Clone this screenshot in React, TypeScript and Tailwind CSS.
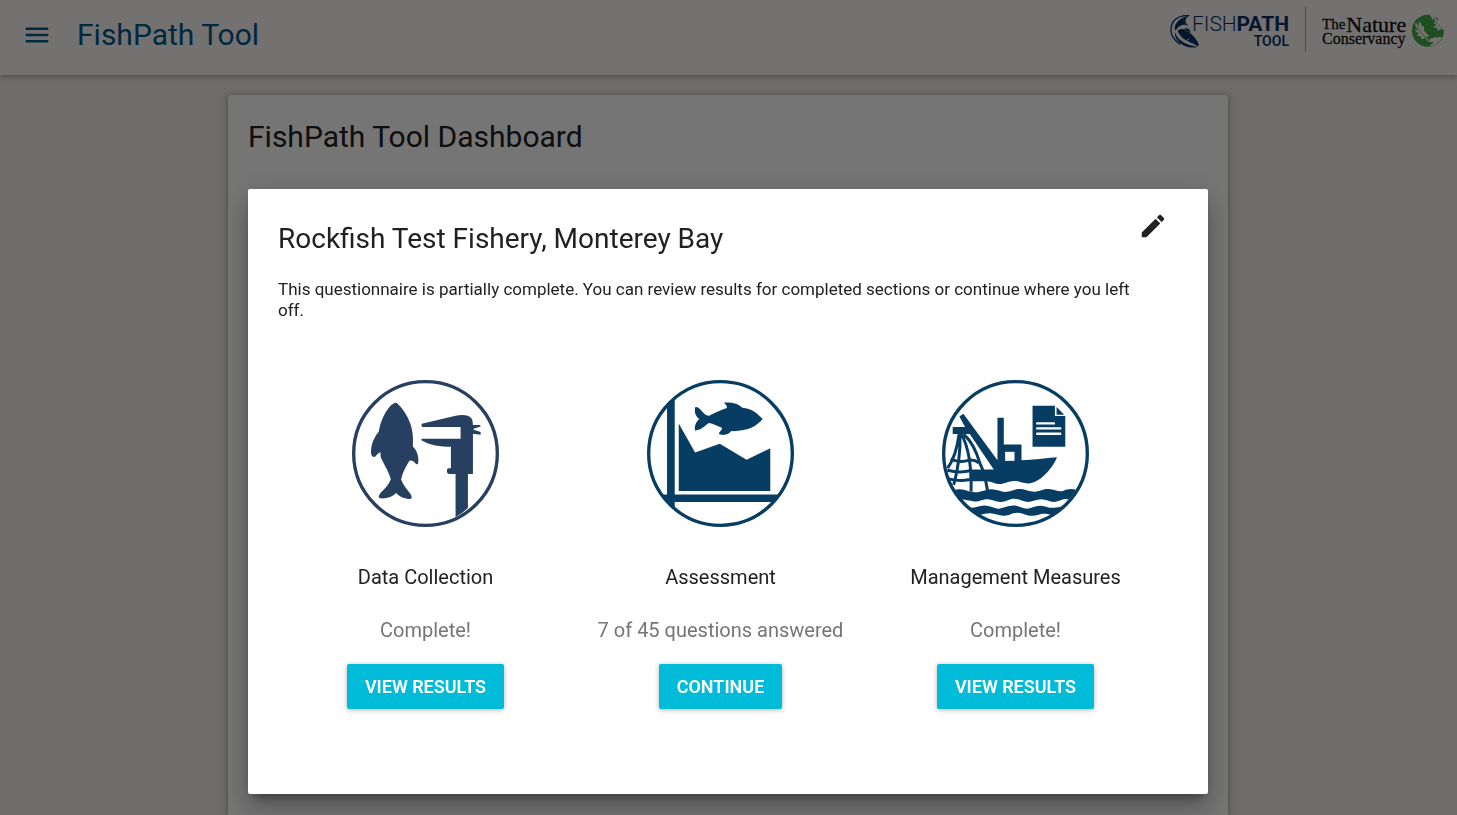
import React from "react";

function FishPathLogo() {
  return (
    <svg className="h-12 w-[122px]" viewBox="0 0 122 48" role="img" aria-label="FishPath Tool">
      <g transform="scale(0.3333) translate(-24 -12)">
        <path d="M88 47C68 46 50 52 41 63C31 76 30 96 38 110C44 120 52 128 61 133" fill="none" stroke="#0a3468" strokeWidth="4" />
        <g fill="#0a3468">
          <path d="M89 46C80 52 75 60 77 66C78 71 82 74 86 77C77 74 68 73 62 77C56 80 50 84 47 92C42 86 44 76 50 68C60 56 72 51 89 46Z" />
          <path d="M53 92C60 86 68 85 76 90C90 97 104 110 112 124C117 132 117 139 113 140C108 134 102 131 93 128C76 121 59 110 53 92Z" />
          <path d="M72 87C80 81 91 86 92 99C85 94 79 91 72 87Z" />
          <path d="M45 97C51 116 68 128 86 134C97 137 106 138 111 141C100 145 81 142 67 134C52 125 43 112 45 97Z" />
        </g>
        <path d="M80 122L87 116" fill="none" stroke="#faf9f5" strokeWidth="3" />
      </g>
      <g fill="#0a3468" fontFamily="'Roboto', sans-serif">
        <text x="24" y="27" fontSize="21" fontWeight="300">FISH</text>
        <text x="121" y="27" fontSize="21" fontWeight="700" textAnchor="end">PATH</text>
        <text x="121" y="42" fontSize="14" fontWeight="600" textAnchor="end">TOOL</text>
      </g>
    </svg>
  );
}

function NatureConservancyLogo() {
  return (
    <svg className="h-12 w-[124px]" viewBox="0 0 124 48" role="img" aria-label="The Nature Conservancy">
      <g fill="#111" stroke="#111" strokeWidth="0.3" fontFamily="'Liberation Serif', serif">
        <text x="0" y="25">
          <tspan fontSize="15">The</tspan>
          <tspan fontSize="22" dx="1" dy="3">Nature</tspan>
        </text>
        <text x="0" y="40" fontSize="16">Conservancy</text>
      </g>
      <g transform="scale(0.3333) translate(-66 -12)">
        <circle cx="384" cy="92" r="48" fill="#42a845" />
        <g fill="#faf9f5">
          <path d="M346 68C352 69 354 75 356 80C357 74 356 69 359 64C364 69 366 75 366 81L371 77C374 83 372 89 371 94C376 93 379 97 379 101C383 101 387 104 388 108C384 110 381 110 379 111C383 115 386 119 388 124L385 126C381 120 377 116 374 114C370 118 366 117 362 115L365 109C359 110 354 108 350 104C354 103 356 101 358 99C352 99 347 95 344 90C349 91 352 90 354 89C348 84 344 76 346 68Z" />
          <path d="M388 44C394 49 397 54 396 60C400 56 403 58 405 62L401 70C405 70 408 72 408 76L399 82C405 84 410 83 413 86L409 91C417 92 422 88 426 86L432 93C433 75 426 59 413 51L414 63L409 57L405 48Q397 44 388 44Z" />
          <path d="M389 126C386 117 393 113 400 114C405 110 411 114 417 111L427 112C419 127 405 137 388 140L394 133Q400 130 401 126Z" />
        </g>
        <path d="M351 76Q361 98 383 121M399 52Q410 72 424 84" fill="none" stroke="#42a845" strokeWidth="2" />
      </g>
    </svg>
  );
}

const ring = <circle cx="242" cy="242" r="215" fill="none" strokeWidth="10" stroke="currentColor" />;

function DataCollectionIcon() {
  return (
    <svg className="size-[147px] text-[#273f60]" viewBox="22 22 440 440" aria-hidden="true">
      {ring}
      <g fill="currentColor">
        <path d="M154 90C163 95 180 116 190 137C204 164 206 194 204 221C216 232 223 250 220 272C218 276 214 275 210 270C205 264 200 262 194 264C184 280 173 299 169 320C174 336 187 349 197 363C202 371 202 377 196 378C180 378 164 371 154 360C143 371 125 378 107 376C100 375 101 369 107 361C119 347 134 334 138 318C133 298 119 277 108 253L107 238C102 239 97 245 92 251C86 255 80 250 79 241C78 218 87 195 102 177C107 145 121 116 138 98Q148 89 154 90Z" />
        <path d="M231 153L329 130C352 124 371 126 380 137Q384 143 384 157H403Q407 157 407 161L386 168V171L407 178V186L384 183V303H369V405Q352 422 332 432V303H312Q306 303 306 295Q306 286 312 286H318V222C287 222 253 217 231 203Q227 198 234 198H347V163H234Q228 162 231 153Z" />
      </g>
    </svg>
  );
}

function AssessmentIcon() {
  return (
    <svg className="size-[147px] text-[#083d63]" viewBox="22 22 440 440" aria-hidden="true">
      {ring}
      <g fill="currentColor">
        <path d="M82 98L105 79V365H417L398 387H105V405L82 382L62 365H82Z" />
        <path d="M117 152L166 239L240 213L320 261L391 226V354H117Z" />
        <path d="M166 104C172 99 181 108 187 116C194 124 200 129 208 129C222 122 242 113 261 106C263 99 256 94 252 90C269 87 296 91 307 105C335 106 356 125 368 139C351 159 327 176 274 175C269 184 250 190 237 184C238 178 245 173 247 166C234 160 219 153 208 151C196 156 190 171 166 173C163 159 169 147 179 139C169 132 163 120 166 104Z" />
      </g>
    </svg>
  );
}

function ManagementIcon() {
  return (
    <svg className="size-[147px] text-[#083d63]" viewBox="22 22 440 440" aria-hidden="true">
      {ring}
      <g fill="currentColor">
        <path d="M74 131L86 123L188 262V135H207V215H260V262C295 260 331 256 366 253C355 283 320 325 286 331C269 334 255 324 239 324C219 324 207 335 190 333C178 332 168 324 154 325H105V290H177L105 184H54V163H91Z" />
        <path d="M293 99H360V130H391V222H293Z" />
        <path d="M365 103L388 126H365Z" />
        <path d="M56 352C76 345 91 351 105 356C123 362 139 355 155 351C171 346 185 350 199 355C217 361 231 352 245 349C266 345 278 355 292 356C310 358 322 347 341 348C358 349 369 357 382 355C397 348 410 346 424 351L402 380C390 375 377 382 366 386C348 391 336 379 319 379C302 379 289 390 271 386C255 382 246 375 230 378C214 383 204 390 187 386C168 378 155 376 138 383C119 391 105 380 77 380Z" />
        <path d="M100 402C120 408 130 399 148 398C168 398 178 408 193 407C210 405 222 396 240 398C258 401 268 411 285 406C303 399 316 395 331 401C345 407 361 405 382 400L351 426C333 422 324 420 309 426C292 431 276 427 264 422C248 417 238 419 222 426C205 431 191 426 180 423C162 418 151 423 133 426Z" />
      </g>
      <path d="M211 237H239V264H211Z" fill="white" />
      <path d="M307 152H357M307 167H376M307 183H376" stroke="white" strokeWidth="7" strokeLinecap="round" />
      <g fill="none" stroke="currentColor" strokeWidth="9">
        <path d="M73 184Q65 248 39 286M76 184Q78 260 57 336M80 184Q112 242 109 356M87 184Q119 214 135 270Q150 300 158 352" />
        <path d="M48 258Q75 272 103 262Q119 260 132 270M38 292Q75 302 109 293M42 318Q74 327 105 320" />
      </g>
    </svg>
  );
}

const sections = [
  { title: "Data Collection", status: "Complete!", action: "VIEW RESULTS", Icon: DataCollectionIcon },
  { title: "Assessment", status: "7 of 45 questions answered", action: "CONTINUE", Icon: AssessmentIcon },
  { title: "Management Measures", status: "Complete!", action: "VIEW RESULTS", Icon: ManagementIcon },
];

export default function App() {
  return (
    <div className="flex h-screen flex-col overflow-hidden bg-[#eeebe2] font-['Roboto',sans-serif] text-[#212121]">
      <header className="z-10 flex h-[75px] shrink-0 items-start justify-between bg-[#faf9f5] pr-[11px] pl-[22px] shadow-[0_2px_5px_rgba(0,0,0,0.26)]">
        <div className="flex h-[70px] items-center gap-[25px] text-[#005a8c]">
          <button type="button" aria-label="Open menu">
            <svg className="size-[30px]" viewBox="0 0 24 24" fill="currentColor">
              <path d="M3 18h18v-2H3v2zm0-5h18v-2H3v2zm0-7v2h18V6H3z" />
            </svg>
          </button>
          <span className="text-[30px] leading-9">FishPath Tool</span>
        </div>
        <div className="flex pt-1">
          <FishPathLogo />
          <div className="mt-[2px] mr-4 ml-[15px] h-[46px] w-px bg-[#a8a8a8]" />
          <NatureConservancyLogo />
        </div>
      </header>

      <div className="flex flex-1 justify-center pt-5 pr-px">
        <main className="w-full max-w-[1000px] rounded-t-[3px] bg-white px-5 pt-6 shadow-[0_1px_6px_rgba(0,0,0,0.4)]">
          <h1 className="text-[30px] leading-9">FishPath Tool Dashboard</h1>
        </main>
      </div>

      <div className="fixed inset-0 z-20 flex items-start justify-center overflow-auto bg-black/54 pt-[189px] pr-px">
        <section
          role="dialog"
          aria-modal="true"
          aria-labelledby="fishery-title"
          className="w-full max-w-[960px] rounded-[2px] bg-white pt-[22px] pr-10 pb-[85px] pl-[30px] shadow-[0_16px_24px_2px_rgba(0,0,0,0.14),0_6px_30px_5px_rgba(0,0,0,0.12),0_8px_10px_-5px_rgba(0,0,0,0.4)]"
        >
          <div className="flex items-start justify-between">
            <h2 id="fishery-title" className="pt-[10px] text-[28px] leading-9">
              Rockfish Test Fishery, Monterey Bay
            </h2>
            <button type="button" aria-label="Edit fishery">
              <svg className="size-[30px]" viewBox="0 0 24 24" fill="currentColor">
                <path d="M3 17.25V21h3.75L17.81 9.94l-3.75-3.75L3 17.25zM20.71 7.04c.39-.39.39-1.02 0-1.41l-2.34-2.34c-.39-.39-1.02-.39-1.41 0l-1.83 1.83 3.75 3.75 1.83-1.83z" />
              </svg>
            </button>
          </div>
          <p className="mt-[22px] mr-5 text-[17px] leading-[21px]">
            This questionnaire is partially complete. You can review results for completed sections or continue where you left off.
          </p>
          <div className="mt-[59px] mr-[5px] grid grid-cols-3">
            {sections.map(({ title, status, action, Icon }) => (
              <div key={title} className="flex flex-col items-center">
                <Icon />
                <h3 className="mt-[38px] text-[20px] leading-6">{title}</h3>
                <p className="mt-[29px] text-[20px] leading-6 text-[#757575]">{status}</p>
                <button
                  type="button"
                  className="mt-[22px] h-[45px] rounded-[2px] bg-[#00bcd9] px-[18px] text-[18px] font-semibold text-white shadow-[0_1px_5px_rgba(0,0,0,0.3)]"
                >
                  {action}
                </button>
              </div>
            ))}
          </div>
        </section>
      </div>
    </div>
  );
}
